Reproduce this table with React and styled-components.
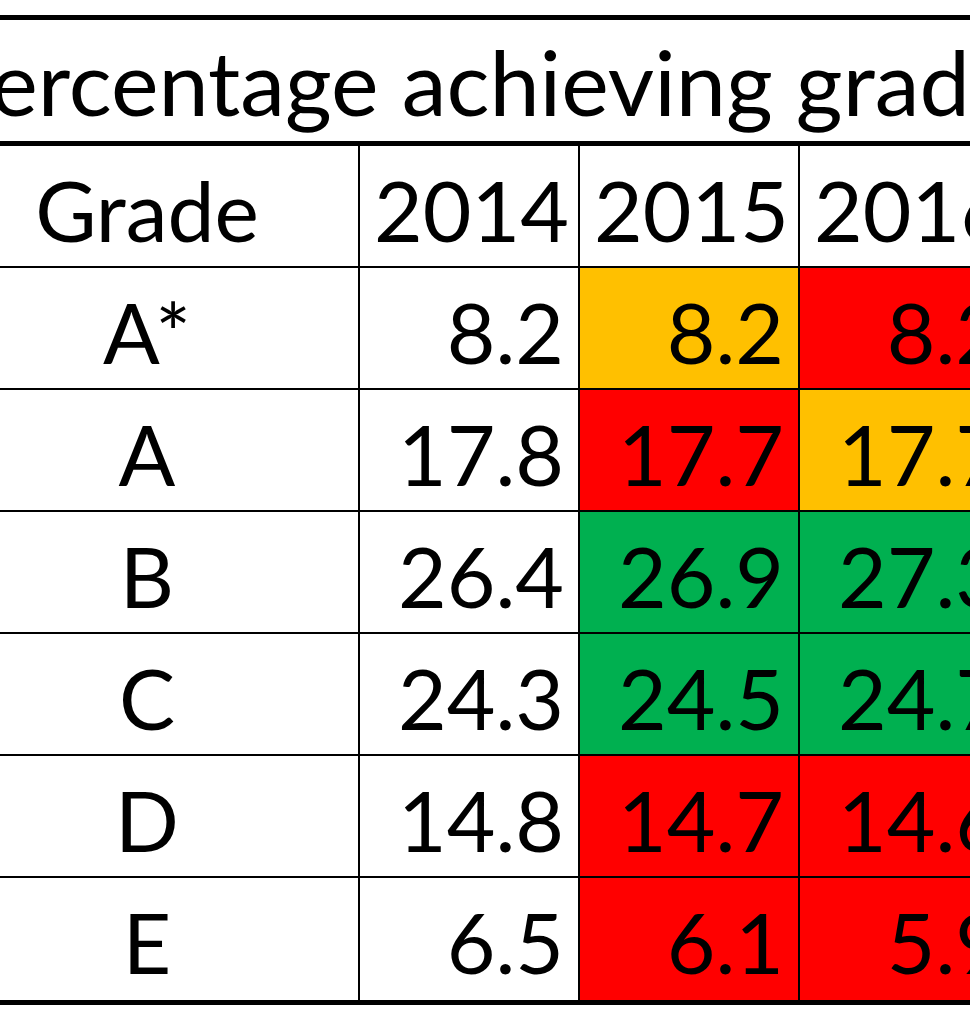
import styled, { createGlobalStyle } from "styled-components";

const GlobalStyle = createGlobalStyle`
  html, body {
    margin: 0;
    padding: 0;
    background: #fff;
    overflow: hidden;
  }
`;

const FILLS = {
  none: "#ffffff",
  amber: "#ffc000",
  red: "#ff0000",
  green: "#00b050",
};

// 표 전체 (왼쪽 끝은 화면 밖으로 잘려 있음)
const Table = styled.div`
  display: grid;
  grid-template-columns: 424px 220px 220px 220px;
  width: 1084px;
  margin: 15px 0 0 -64px;
  border-top: 5px solid #000;
  border-bottom: 5px solid #000;
  font-family: Lato, "Liberation Sans", sans-serif;
  color: #000;
`;

const TitleCell = styled.div`
  grid-column: 1 / -1;
  height: 126px;
  box-sizing: border-box;
  border-bottom: 5px solid #000;
  text-align: center;
  font-size: 90px;
  line-height: 108px;
  padding-top: 7px;
  white-space: nowrap;
  overflow: hidden;
`;

const Cell = styled.div`
  height: 122px;
  box-sizing: border-box;
  padding: 8px 14px 0;
  font-size: 84px;
  line-height: 111px;
  white-space: nowrap;
  overflow: hidden;
  text-align: ${(p) => (p.$center ? "center" : "right")};
  background: ${(p) => FILLS[p.$fill || "none"]};
  border-right: 2px solid #000;
  border-bottom: ${(p) => (p.$last ? "none" : "2px solid #000")};
`;

const years = ["2014", "2015", "2016"];

const rows = [
  { grade: "A*", values: [["8.2"], ["8.2", "amber"], ["8.2", "red"]] },
  { grade: "A", values: [["17.8"], ["17.7", "red"], ["17.7", "amber"]] },
  { grade: "B", values: [["26.4"], ["26.9", "green"], ["27.3", "green"]] },
  { grade: "C", values: [["24.3"], ["24.5", "green"], ["24.7", "green"]] },
  { grade: "D", values: [["14.8"], ["14.7", "red"], ["14.6", "red"]] },
  { grade: "E", values: [["6.5"], ["6.1", "red"], ["5.9", "red"]] },
];

const App = () => {
  return (
    <>
      <GlobalStyle />
      <Table>
        <TitleCell>Percentage achieving grade</TitleCell>
        <Cell $center>Grade</Cell>
        {years.map((y) => (
          <Cell key={y}>{y}</Cell>
        ))}
        {rows.map((row, i) => {
          const last = i === rows.length - 1;
          return [
            <Cell key={row.grade} $center $last={last}>
              {row.grade}
            </Cell>,
            ...row.values.map(([v, fill], j) => (
              <Cell key={row.grade + j} $fill={fill} $last={last}>
                {v}
              </Cell>
            )),
          ];
        })}
      </Table>
    </>
  );
};

export default App;
